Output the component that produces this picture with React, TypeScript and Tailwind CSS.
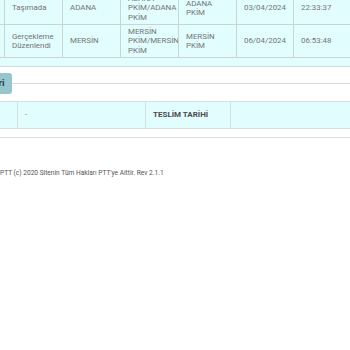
const rows = [
  { status: ["Taşımada"], city: "ADANA", unit: ["ADANA", "PKİM/ADANA", "PKİM"], place: ["ADANA", "PKİM"], date: "03/04/2024", time: "22:33:37" },
  { status: ["Gerçekleme", "Düzenlendi"], city: "MERSİN", unit: ["MERSİN", "PKİM/MERSİN", "PKİM"], place: ["MERSİN", "PKİM"], date: "06/04/2024", time: "06:53:48" },
];

function Cell({ lines }: { lines: string[] }) {
  return (
    <div className="border-l border-[#c8d4d6] px-[7px] flex flex-col justify-center leading-[9.5px] whitespace-nowrap">
      {lines.map((l) => (
        <span key={l}>{l}</span>
      ))}
    </div>
  );
}

export default function App() {
  return (
    <div className="w-[350px] h-[350px] overflow-hidden bg-white font-['Roboto',sans-serif] text-[#747474]">
      {/* hareket tablosu */}
      <div className="-mt-[8px] -ml-[6px] w-[366px] bg-[#e2fdfe] border-b border-[#cfdcdd] pb-[8px]">
        {rows.map((r) => (
          <div key={r.time} className="grid grid-cols-[10px_58px_58px_58px_58px_57px_67px] h-[33px] border-b border-[#c8d4d6] text-[7.9px]">
            <div />
            <Cell lines={r.status} />
            <Cell lines={[r.city]} />
            <Cell lines={r.unit} />
            <Cell lines={r.place} />
            <Cell lines={[r.date]} />
            <Cell lines={[r.time]} />
          </div>
        ))}
      </div>

      {/* geri butonu */}
      <div className="relative mt-[6px] h-[21px] flex items-center">
        <div className="absolute left-0 right-0 top-[10px] border-t border-[#dcdcdc]" />
        <button className="relative -ml-[16px] h-[21px] w-[28px] rounded-[3px] bg-[#98c6ce] text-[#2c3e40] text-[9.5px] font-bold flex items-center pl-[3px]">
          Geri
        </button>
      </div>

      {/* teslim bilgisi */}
      <div className="mt-[7px] grid grid-cols-[17px_128px_85px_120px] h-[28px] bg-[#e2fdfe] border-y border-[#d4dfe0] text-[8px]">
        <div />
        <div className="border-l border-[#d4dfe0] px-[7px] flex items-center text-[#8a8a8a]">-</div>
        <div className="border-l border-[#d4dfe0] px-[7px] flex items-center font-bold text-[#4a4a4a]">TESLİM TARİHİ</div>
        <div className="border-l border-[#d4dfe0]" />
      </div>
      <div className="mt-[8px] border-t border-[#dcdcdc]" />

      <p className="mt-[31px] text-[6.6px] text-[#555]">PTT (c) 2020 Sitenin Tüm Hakları PTT'ye Aittir. Rev 2.1.1</p>
    </div>
  );
}
